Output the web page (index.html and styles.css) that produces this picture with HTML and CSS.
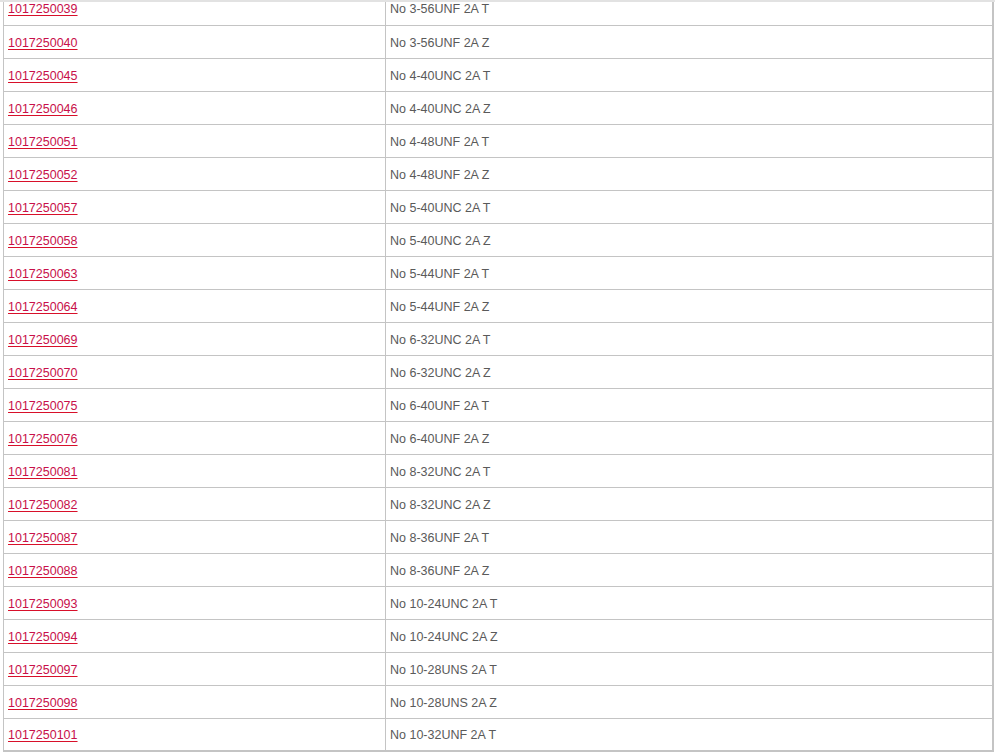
FILE: index.html
```html
<!DOCTYPE html>
<html>
<head>
<meta charset="utf-8">
<link rel="stylesheet" href="styles.css">
</head>
<body>
<div class="viewport">
<table class="parts">
<tbody>
<tr><td class="code"><a href="#">1017250039</a></td><td class="desc">No 3-56UNF 2A T</td></tr>
<tr><td class="code"><a href="#">1017250040</a></td><td class="desc">No 3-56UNF 2A Z</td></tr>
<tr><td class="code"><a href="#">1017250045</a></td><td class="desc">No 4-40UNC 2A T</td></tr>
<tr><td class="code"><a href="#">1017250046</a></td><td class="desc">No 4-40UNC 2A Z</td></tr>
<tr><td class="code"><a href="#">1017250051</a></td><td class="desc">No 4-48UNF 2A T</td></tr>
<tr><td class="code"><a href="#">1017250052</a></td><td class="desc">No 4-48UNF 2A Z</td></tr>
<tr><td class="code"><a href="#">1017250057</a></td><td class="desc">No 5-40UNC 2A T</td></tr>
<tr><td class="code"><a href="#">1017250058</a></td><td class="desc">No 5-40UNC 2A Z</td></tr>
<tr><td class="code"><a href="#">1017250063</a></td><td class="desc">No 5-44UNF 2A T</td></tr>
<tr><td class="code"><a href="#">1017250064</a></td><td class="desc">No 5-44UNF 2A Z</td></tr>
<tr><td class="code"><a href="#">1017250069</a></td><td class="desc">No 6-32UNC 2A T</td></tr>
<tr><td class="code"><a href="#">1017250070</a></td><td class="desc">No 6-32UNC 2A Z</td></tr>
<tr><td class="code"><a href="#">1017250075</a></td><td class="desc">No 6-40UNF 2A T</td></tr>
<tr><td class="code"><a href="#">1017250076</a></td><td class="desc">No 6-40UNF 2A Z</td></tr>
<tr><td class="code"><a href="#">1017250081</a></td><td class="desc">No 8-32UNC 2A T</td></tr>
<tr><td class="code"><a href="#">1017250082</a></td><td class="desc">No 8-32UNC 2A Z</td></tr>
<tr><td class="code"><a href="#">1017250087</a></td><td class="desc">No 8-36UNF 2A T</td></tr>
<tr><td class="code"><a href="#">1017250088</a></td><td class="desc">No 8-36UNF 2A Z</td></tr>
<tr><td class="code"><a href="#">1017250093</a></td><td class="desc">No 10-24UNC 2A T</td></tr>
<tr><td class="code"><a href="#">1017250094</a></td><td class="desc">No 10-24UNC 2A Z</td></tr>
<tr><td class="code"><a href="#">1017250097</a></td><td class="desc">No 10-28UNS 2A T</td></tr>
<tr><td class="code"><a href="#">1017250098</a></td><td class="desc">No 10-28UNS 2A Z</td></tr>
<tr><td class="code"><a href="#">1017250101</a></td><td class="desc">No 10-32UNF 2A T</td></tr>
</tbody>
</table>
</div>
</body>
</html>
```
FILE: styles.css
```css
html, body {
  margin: 0;
  padding: 0;
  background: #fff;
}
body {
  font-family: "Liberation Sans", Arial, sans-serif;
  font-size: 12.5px;
  color: #5a5a5a;
}
.viewport {
  height: 752px;
  overflow: hidden;
  padding-left: 3px;
  box-sizing: border-box;
  border-top: 2px solid #e2e2e2;
}
.parts {
  width: 991px;
  margin-top: -10px;
  border-collapse: collapse;
  border-left: 1px solid #c4c4c4;
  border-right: 2px solid #c4c4c4;
  border-bottom: 2px solid #c4c4c4;
}
.parts td {
  height: 33px;
  padding: 2px 4px 0;
  border-bottom: 1px solid #c4c4c4;
  vertical-align: middle;
  box-sizing: border-box;
}
.parts td.code {
  width: 382px;
  border-right: 1px solid #c4c4c4;
}
.parts a {
  color: #c8104a;
  text-decoration: underline;
  text-decoration-color: #d8102a;
  text-underline-offset: 2px;
}
```
